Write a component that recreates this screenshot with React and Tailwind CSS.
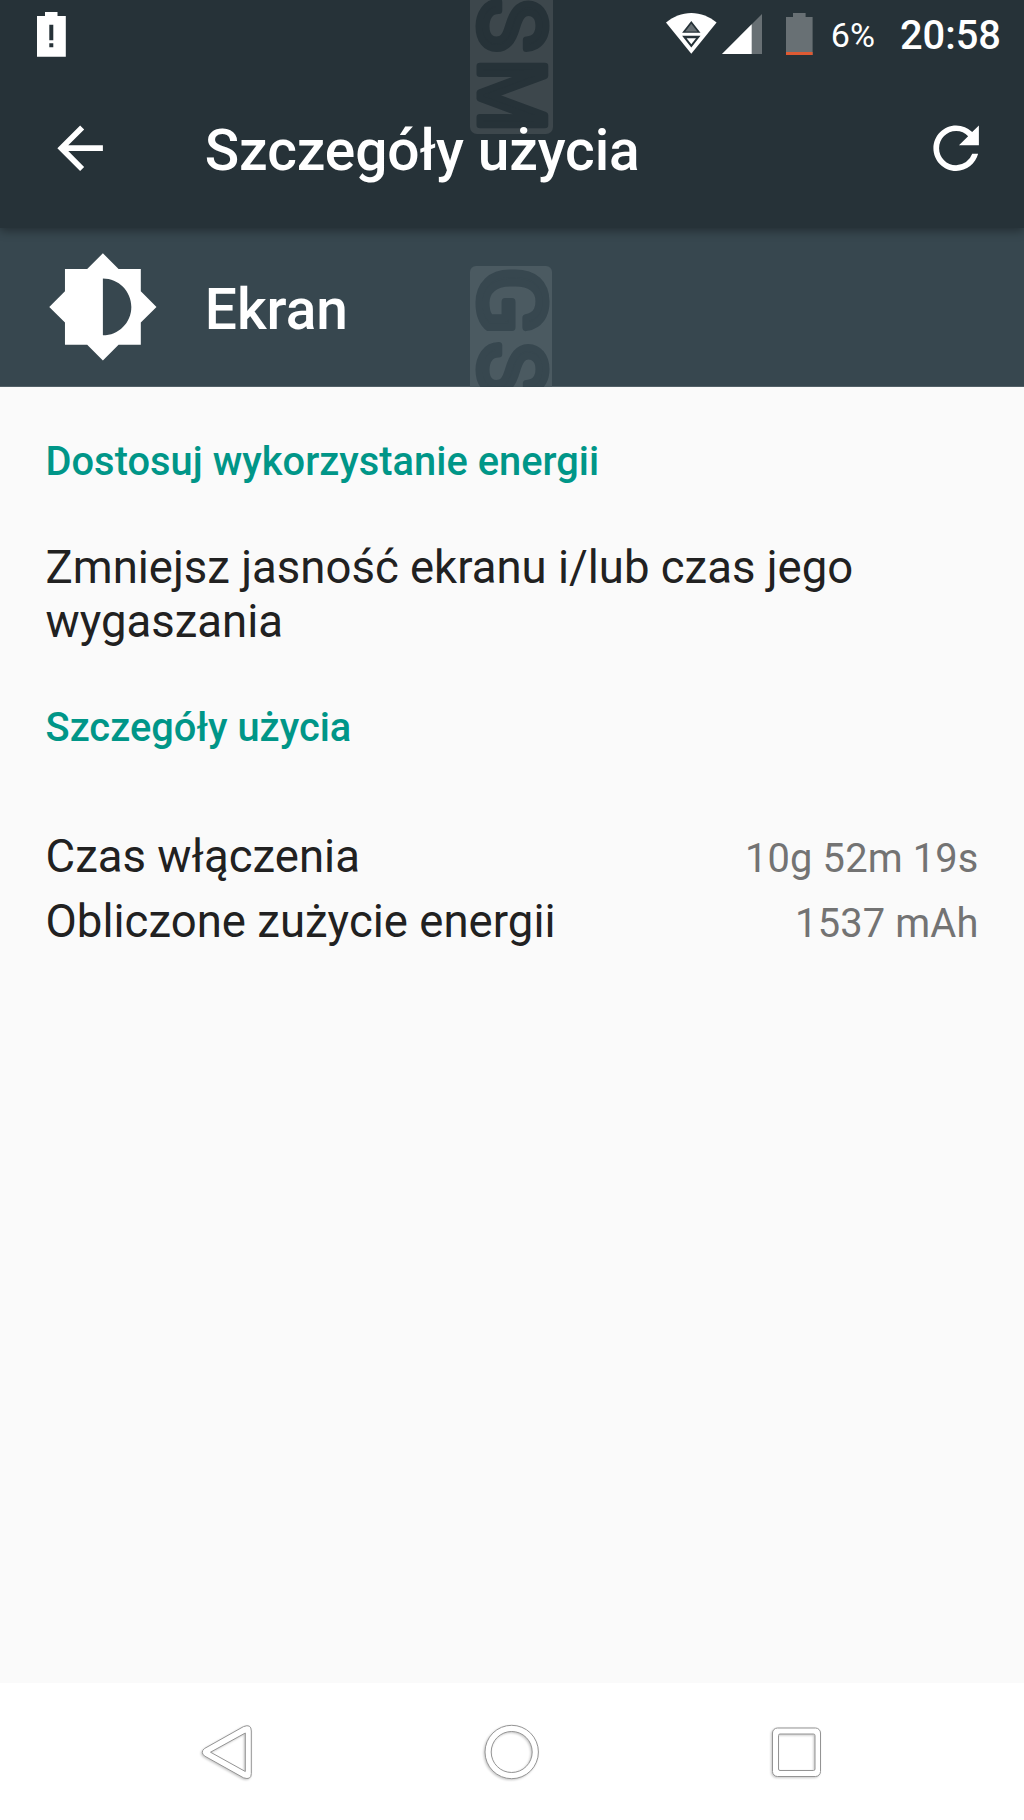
const BatteryAlertIcon = () => (
	<svg className="mt-3 block h-[45px] w-[29px] fill-white" viewBox="0 0 29 45">
		<path
			fillRule="evenodd"
			d="M8 0h12.500v4H28.800v40.700H0V4h8zM12.300 12.700v15.600h4V12.700zM12.300 31.300v4h4v-4z"
		/>
	</svg>
);

const WifiIcon = () => (
	<svg className="mt-[13px] block h-[41px] w-[51px]" viewBox="0 0 51 41">
		<path d="M0 9.500C7 3.800 16 0 25.300 0S43.600 3.800 50.600 9.500L25.300 40.700z" fill="#fff" />
		<path d="M25.300 8L34.500 19.800H16.100zM16.100 22.700h18.400L25.300 34.400z" fill="#263238" />
		<path d="M25.300 10.800L31.300 18.500H19.300z" fill="#687074" />
		<path d="M20.600 25.300h9.400L25.300 31.300z" fill="#fff" />
	</svg>
);

const SignalIcon = () => (
	<svg className="ml-[5px] mt-3.5 block h-10 w-10" viewBox="0 0 40 40">
		<path d="M40 0v40H0z" fill="#687074" />
		<path d="M29.700 10.300V40H0z" fill="#fff" />
	</svg>
);

const BatteryIcon = () => (
	<svg className="ml-6 mt-[13px] block h-[42px] w-[27px]" viewBox="0 0 27 42">
		<path d="M7 0h12.600v4h7v38H0V4h7z" fill="#687074" />
		<path d="M0 39h26.600v3H0z" fill="#de5a33" />
	</svg>
);

const BackIcon = () => (
	<svg className="block size-[68.270px] fill-white" viewBox="0 0 24 24">
		<path d="M20 11H7.830l5.590-5.590L12 4l-8 8 8 8 1.410-1.410L7.830 13H20v-2z" />
	</svg>
);

const RefreshIcon = () => (
	<svg className="block size-[68.270px] fill-white" viewBox="0 0 24 24">
		<path d="M17.650 6.350A7.958 7.958 0 0 0 12 4c-4.420 0-7.990 3.580-7.990 8s3.570 8 7.990 8c3.730 0 6.840-2.550 7.730-6h-2.080A5.990 5.990 0 0 1 12 18c-3.310 0-6-2.690-6-6s2.690-6 6-6c1.660 0 3.140.690 4.220 1.780L13 11h7V4l-2.350 2.350z" />
	</svg>
);

const BrightnessIcon = () => (
	<svg className="block size-[113.780px] fill-white" viewBox="0 0 24 24">
		<path d="M20 15.310L23.310 12 20 8.690V4h-4.690L12 .690 8.690 4H4v4.690L.690 12 4 15.310V20h4.690L12 23.310 15.310 20H20v-4.690zM12 18V6c3.310 0 6 2.690 6 6s-2.690 6-6 6z" />
	</svg>
);

const NavIcon = ( { children } ) => (
	<svg
		className="block size-[60px] fill-white stroke-[#949494] drop-shadow-[-1px_1px_1px_rgba(0,0,0,0.22)]"
		viewBox="0 0 60 60"
		fillRule="evenodd"
		strokeLinejoin="round"
	>
		{ children }
	</svg>
);

const StatusBar = () => (
	<div className="flex h-[68px] items-start pl-[37px] pr-[23px]">
		<BatteryAlertIcon />
		<div className="ml-auto flex items-start">
			<WifiIcon />
			<SignalIcon />
			<BatteryIcon />
			<span className="ml-[18px] text-[34.130px] leading-[71px]">6%</span>
			<span className="ml-[25px] text-[39.820px] font-medium leading-[71px]">20:58</span>
		</div>
	</div>
);

const Toolbar = () => (
	<div className="flex h-40 items-center pl-[46px] pr-[33.700px]">
		<BackIcon />
		<h1 className="ml-[90.500px] pt-[5px] text-[56.890px] font-medium leading-[80px] tracking-[-0.1px]">
			Szczegóły użycia
		</h1>
		<div className="ml-auto">
			<RefreshIcon />
		</div>
	</div>
);

const SectionTitle = ( { children } ) => (
	<h2 className="text-[39.820px] font-medium leading-[48px] tracking-[0.02px] text-[#009688]">
		{ children }
	</h2>
);

const DetailRow = ( { label, value } ) => (
	<div className="flex h-[65px] items-baseline justify-between leading-[64px]">
		<span>{ label }</span>
		<span className="text-[39.820px] tracking-[0.15px] text-[#737373]">{ value }</span>
	</div>
);

const App = () => {
	return (
		<div className="flex h-[1820px] w-[1024px] flex-col overflow-hidden bg-[#fafafa] font-['Roboto',sans-serif]">
			<header className="relative z-10 h-[228px] bg-[#263238] text-white shadow-[0_3px_9px_rgba(0,0,0,0.35)]">
				<svg className="absolute left-[470px] top-0" width="83" height="134">
					<rect x="0" y="-140" width="83" height="274" rx="7" fill="#3d474c" />
					<g
						className="fill-[#263238] stroke-[#263238]"
						transform="translate(9.500 0) rotate(90)"
						strokeWidth="7"
						strokeLinejoin="round"
						fontSize="90"
					>
						<text x="-1.500">S</text>
						<text x="59" textLength="73" lengthAdjust="spacingAndGlyphs">M</text>
					</g>
				</svg>
				<div className="relative">
					<StatusBar />
					<Toolbar />
				</div>
			</header>

			<section className="relative flex h-[159px] items-start border-b border-[#526067] bg-[#37474f] pl-[45.500px] text-white">
				<svg className="absolute left-[470px] top-[38px]" width="82" height="121">
					<rect width="82" height="140" rx="6" fill="#4b5a61" />
					<g
						className="fill-[#37474f] stroke-[#37474f]"
						transform="translate(9.500 0) rotate(90)"
						strokeWidth="7"
						strokeLinejoin="round"
						fontSize="90"
					>
						<text x="1.500" textLength="67" lengthAdjust="spacingAndGlyphs">G</text>
						<text x="76">S</text>
					</g>
				</svg>
				<div className="mt-[22px]">
					<BrightnessIcon />
				</div>
				<h2 className="ml-[45.500px] text-[56.890px] font-medium leading-[163px]">Ekran</h2>
			</section>

			<main className="flex-1 px-[45.500px] pt-[51px] text-[45.510px] text-[#212121]">
				<SectionTitle>Dostosuj wykorzystanie energii</SectionTitle>
				<p className="my-[55px] leading-[54px]">
					Zmniejsz jasność ekranu i/lub czas jego wygaszania
				</p>
				<SectionTitle>Szczegóły użycia</SectionTitle>
				<div className="mt-[72.500px] tracking-[0.03px]">
					<DetailRow label="Czas włączenia" value="10g 52m 19s" />
					<DetailRow label="Obliczone zużycie energii" value="1537 mAh" />
				</div>
			</main>

			<nav className="flex h-[137px] items-center gap-[225px] bg-white pl-[197px]">
				<NavIcon>
					<path d="M7.500 26.500L46.500 4.600Q54.300 1.500 54.300 9V51.500Q54.300 58.500 46.500 55.800L7.500 34Q3 30.200 7.500 26.500zM13.500 30.200L48.300 11V49.500z" />
				</NavIcon>
				<NavIcon>
					<path d="M3 30a26.700 26.700 0 1 0 53.400 0a26.700 26.700 0 1 0-53.400 0zM9.200 30a20.500 20.500 0 1 0 41 0a20.500 20.500 0 1 0-41 0z" />
				</NavIcon>
				<NavIcon>
					<path d="M10.500 6H48.500a5 5 0 0 1 5 5V49.500a5 5 0 0 1-5 5H10.500a5 5 0 0 1-5-5V11a5 5 0 0 1 5-5zM13 12H46.500a1.500 1.500 0 0 1 1.500 1.500V47a1.500 1.500 0 0 1-1.500 1.500H13a1.500 1.500 0 0 1-1.500-1.500V13.500a1.500 1.500 0 0 1 1.500-1.500z" />
				</NavIcon>
			</nav>
		</div>
	);
};

export default App;
